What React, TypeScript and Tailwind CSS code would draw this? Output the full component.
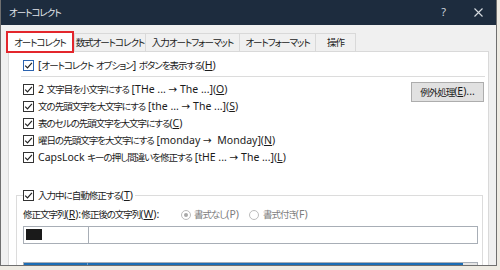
import React from "react";

const CJK = /[\u3000-\u30ff\u4e00-\u9fff\uff00-\uffef]/;

function T({ s }: { s: string }) {
  const tokens = s.split(/(_.|[\u3000-\u30ff\u4e00-\u9fff\uff00-\uffef]+)/).filter((p) => p !== "");
  return (
    <>
      {tokens.map((p, i) => {
        if (p.startsWith("_") && p.length === 2) {
          return (
            <span key={i} className="underline underline-offset-[1px]">
              {p[1]}
            </span>
          );
        }
        if (CJK.test(p)) {
          return (
            <span
              key={i}
              className="font-['Noto_Sans_CJK_JP',sans-serif] text-[9.5px] tracking-[-1px] [font-feature-settings:'palt']"
            >
              {p}
            </span>
          );
        }
        return <span key={i}>{p}</span>;
      })}
    </>
  );
}

function Check({ blue = false }: { blue?: boolean }) {
  return (
    <span
      className={`inline-flex h-[11px] w-[11px] shrink-0 items-center justify-center border bg-white ${
        blue ? "border-[#2b63b0]" : "border-[#333333]"
      }`}
    >
      <svg width="9" height="9" viewBox="0 0 9 9">
        <path d="M1.2 4.6 L3.5 6.9 L7.9 1.8" fill="none" stroke="#222" strokeWidth="1.2" />
      </svg>
    </span>
  );
}

function Row({ s, blue = false }: { s: string; blue?: boolean }) {
  return (
    <div className="flex h-[17px] items-center gap-[4px] whitespace-nowrap">
      <Check blue={blue} />
      <span>
        <T s={s} />
      </span>
    </div>
  );
}

export default function App() {
  return (
    <div className="h-[270px] w-[500px] overflow-hidden bg-[#eeebe3] font-['Noto_Sans','DejaVu_Sans','Noto_Sans_CJK_JP',sans-serif] text-[10.5px] text-[#1b1b1b]">
      <div className="flex h-[266px] w-[497px] flex-col overflow-hidden border-x border-b border-[#6f6f6f] bg-[#f0f0f0]">
        {/* title bar */}
        <div className="flex h-[25px] shrink-0 items-center bg-[#1d2c3e] pl-[8px] text-[#e2e6ea]">
          <span className="whitespace-nowrap">
            <T s="オートコレクト" />
          </span>
          <span className="ml-auto mr-[28px] text-[11px] text-[#cfd5dc]">?</span>
          <svg className="mr-[13px]" width="9" height="9" viewBox="0 0 9 9">
            <path d="M0.5 0.5 L8.5 8.5 M8.5 0.5 L0.5 8.5" stroke="#d6dbe0" strokeWidth="1.1" />
          </svg>
        </div>

        {/* tabs */}
        <div className="relative z-10 -mb-[2px] flex h-[28px] shrink-0 items-end whitespace-nowrap pl-[5px]">
          <div className="flex h-[22px] w-[68px] items-center justify-center border-[2.5px] border-[#e3262c] bg-white">
            <T s="オートコレクト" />
          </div>
          <div className="mb-[2px] flex h-[18px] w-[72px] items-center justify-center border border-b-0 border-[#d9d9d9] bg-[#f0f0f0]">
            <T s="数式オートコレクト" />
          </div>
          <div className="-ml-px mb-[2px] flex h-[18px] w-[95px] items-center justify-center border border-b-0 border-[#d9d9d9] bg-[#f0f0f0]">
            <T s="入力オートフォーマット" />
          </div>
          <div className="-ml-px mb-[2px] flex h-[18px] w-[77px] items-center justify-center border border-b-0 border-[#d9d9d9] bg-[#f0f0f0]">
            <T s="オートフォーマット" />
          </div>
          <div className="-ml-px mb-[2px] flex h-[18px] w-[41px] items-center justify-center border border-b-0 border-[#d9d9d9] bg-[#f0f0f0]">
            <T s="操作" />
          </div>
        </div>

        {/* panel */}
        <div className="ml-[7px] mr-[7px] flex flex-1 flex-col border border-b-0 border-[#d9d9d9] bg-white">
          <div className="ml-[14px] mt-[5px]">
            <Row blue s="[オートコレクト オプション] ボタンを表示する(_H)" />
          </div>
          <div className="ml-[12px] mr-[3px] mt-[2px] h-px bg-[#dcdcdc]" />
          <div className="mt-[4px] flex items-start pl-[14px] pr-[4px]">
            <div className="flex flex-col">
              <Row s="2 文字目を小文字にする [THe ... → The ...](_O)" />
              <Row s="文の先頭文字を大文字にする [the ... → The ...](_S)" />
              <Row s="表のセルの先頭文字を大文字にする(_C)" />
              <Row s={"曜日の先頭文字を大文字にする [monday →\u00a0 Monday](_N)"} />
              <Row s="CapsLock キーの押し間違いを修正する [tHE ... → The ...](_L)" />
            </div>
            <div className="ml-auto mt-px flex h-[20px] w-[73px] items-center justify-center whitespace-nowrap border border-[#adadad] bg-[#e1e1e1]">
              <T s="例外処理(_E)..." />
            </div>
          </div>

          <fieldset className="ml-[7px] mr-[5px] mt-[21px] border border-b-0 border-[#dcdcdc] pl-[6px] pr-[4px]">
            <legend className="flex h-[17px] items-center gap-[4px] whitespace-nowrap bg-white pr-[2px]">
              <Check />
              <span>
                <T s="入力中に自動修正する(_T)" />
              </span>
            </legend>
            <div className="mt-[2px] flex h-[17px] items-center whitespace-nowrap">
              <span className="w-[158px]">
                <T s="修正文字列(_R):修正後の文字列(_W):" />
              </span>
              <span className="flex w-[68px] items-center gap-[3px] text-[#7d7d7d]">
                <span className="flex h-[10px] w-[10px] items-center justify-center rounded-full border border-[#bcbcbc] bg-white">
                  <span className="h-[4px] w-[4px] rounded-full bg-[#a8a8a8]" />
                </span>
                <span>
                  <T s="書式なし(P)" />
                </span>
              </span>
              <span className="flex items-center gap-[4px] text-[#7d7d7d]">
                <span className="h-[10px] w-[10px] rounded-full border border-[#bcbcbc] bg-white" />
                <span>
                  <T s="書式付き(F)" />
                </span>
              </span>
            </div>
            <div className="mt-[3px] flex h-[18px] border border-[#a8aeb6]">
              <div className="w-[64px] pl-[2px] pt-[2px]">
                <div className="h-[11px] w-[16px] bg-[#1a1a1a]" />
              </div>
              <div className="flex-1 border-l border-[#a8aeb6]" />
            </div>
            <div className="mt-[18px] flex h-[30px] border border-[#a8aeb6]">
              <div className="flex h-full flex-1 bg-[#1c6db5]">
                <div className="w-[64px] border-r border-[#6f9fcc]" />
              </div>
              <div className="w-[14px] bg-[#e6e6e6]" />
            </div>
          </fieldset>
        </div>
      </div>
    </div>
  );
}
